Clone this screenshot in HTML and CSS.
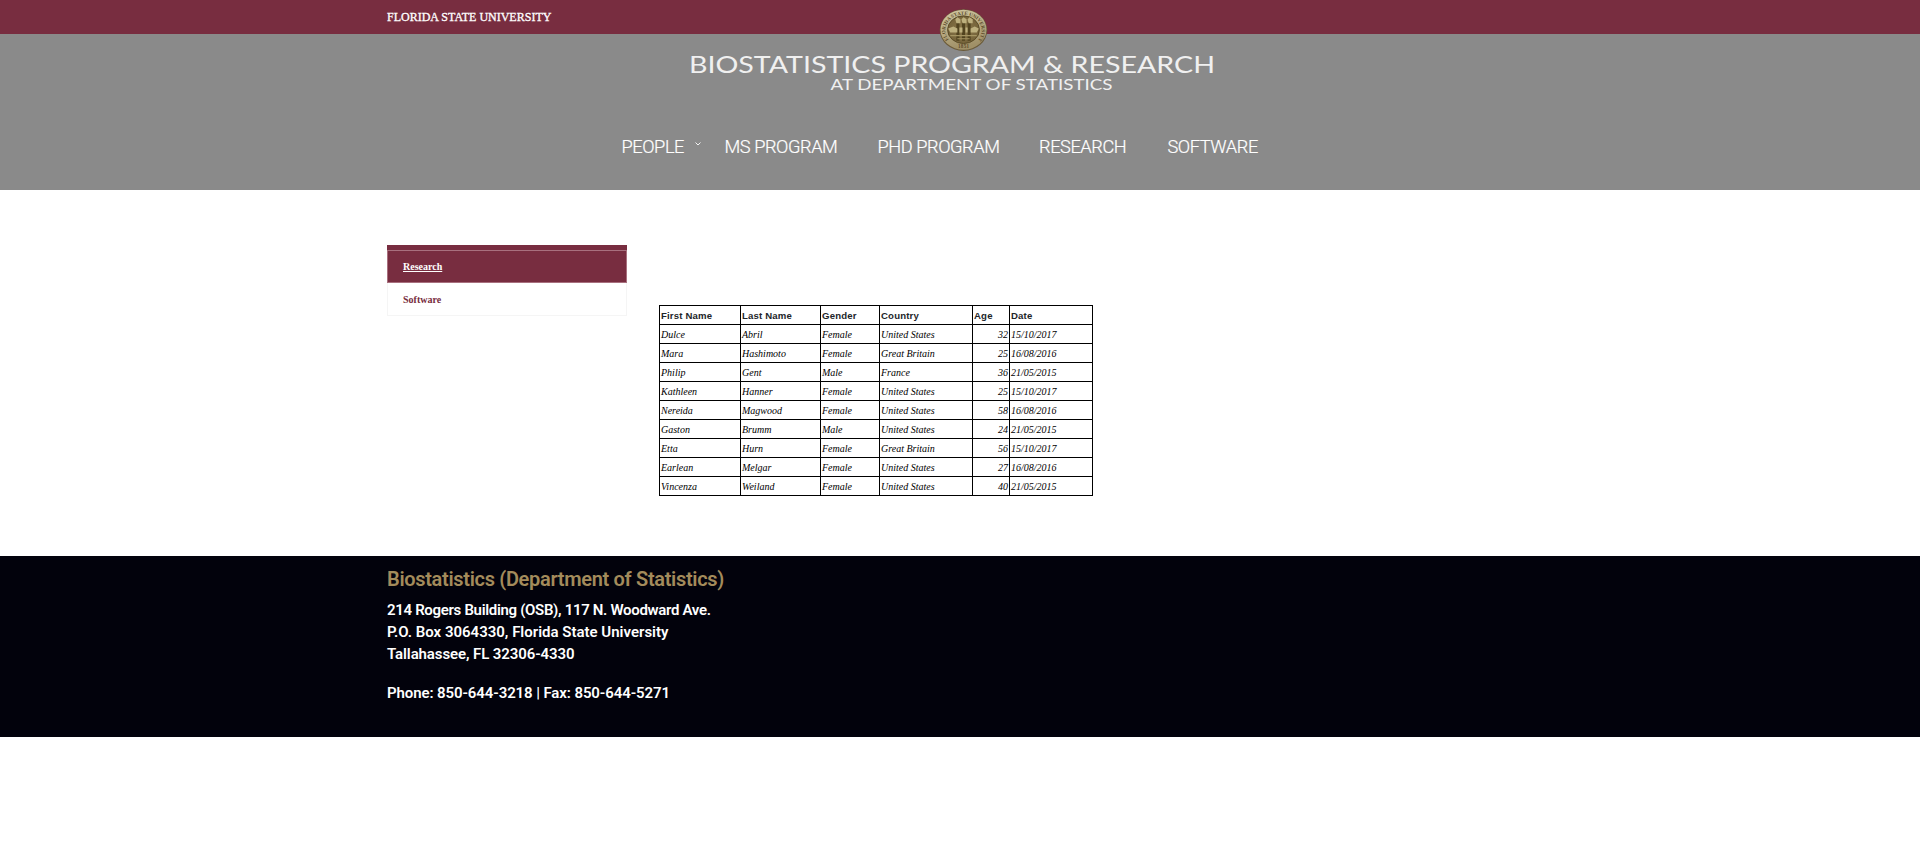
FILE: index.html
```html
<!DOCTYPE html>
<html lang="en">
<head>
<meta charset="utf-8">
<title>Research | Biostatistics</title>
<link rel="stylesheet" href="styles.css">
</head>
<body>
<div class="topbar"><a class="university">FLORIDA STATE UNIVERSITY</a></div>
<svg class="seal" width="49" height="44" viewBox="0 0 48 43" role="img" aria-label="University seal">
  <defs>
    <radialGradient id="gold"><stop offset="0" stop-color="#8c7a4c"/><stop offset="1" stop-color="#75633a"/></radialGradient>
    <linearGradient id="rim" x2="0.3" y2="1"><stop offset="0" stop-color="#d3caa4"/><stop offset="1" stop-color="#a09067"/></linearGradient>
    <path id="arc" d="M9.5 31 A17.8 15.4 0 1 1 38.5 31"/>
  </defs>
  <ellipse cx="24" cy="21.6" rx="23.3" ry="20.4" fill="#6b5a38"/>
  <ellipse cx="24" cy="21.2" rx="22.5" ry="19.6" fill="url(#rim)"/>
  <ellipse cx="24" cy="21.2" rx="15.6" ry="13.6" fill="url(#gold)" stroke="#51421f" stroke-width=".8"/>
  <text class="seal-text"><textPath href="#arc" textLength="72">FLORIDA STATE UNIVERSITY</textPath></text>
  <text class="seal-text" x="18.5" y="38.8" textLength="11">1851</text>
  <g fill="#51431f"><path d="M17 14h3v18h-3zM22.5 14h3v18h-3zM28 14h3v18h-3z"/></g>
  <g fill="#bdb07e"><path d="M16 11l2-2 3 2v4h-4zM22 11l2-2 3 2v4h-4zM28 11l2-2 3 2v4h-4zM9 20l5-2 4 2v4h-7zM31 20l4-2 4 2-2 4h-6zM20 19h3v5h-3zM26 19h2v5h-2z"/></g>
  <path d="M11 27h26M18 30h12" stroke="#a49462" fill="none"/>
</svg>
<header class="header">
  <svg class="wordmark" width="540" height="50" viewBox="684 50 540 50">
    <text class="brand" x="689" y="73.4" textLength="526" lengthAdjust="spacingAndGlyphs">BIOSTATISTICS PROGRAM &amp; RESEARCH</text>
    <text class="brand-sub" x="830.5" y="89.5" textLength="282" lengthAdjust="spacingAndGlyphs">AT DEPARTMENT OF STATISTICS</text>
  </svg>
  <nav class="nav">
    <a>PEOPLE<svg class="chevron" width="6" height="4" viewBox="0 0 6 4"><path d="M.5 .5L3 3L5.5 .5" fill="none" stroke="#fff" stroke-width=".9"/></svg></a>
    <a>MS PROGRAM</a><a>PHD PROGRAM</a><a>RESEARCH</a><a>SOFTWARE</a>
  </nav>
</header>
<main class="main">
  <aside class="side"><a class="active">Research</a><a>Software</a></aside>
  <table class="people">
    <colgroup><col class="c1"><col class="c2"><col class="c3"><col class="c4"><col class="c5"><col class="c6"></colgroup>
    <thead><tr><th>First Name</th><th>Last Name</th><th>Gender</th><th>Country</th><th>Age</th><th>Date</th></tr></thead>
    <tbody>
    <tr><td>Dulce</td><td>Abril</td><td>Female</td><td>United States</td><td>32</td><td>15/10/2017</td></tr>
    <tr><td>Mara</td><td>Hashimoto</td><td>Female</td><td>Great Britain</td><td>25</td><td>16/08/2016</td></tr>
    <tr><td>Philip</td><td>Gent</td><td>Male</td><td>France</td><td>36</td><td>21/05/2015</td></tr>
    <tr><td>Kathleen</td><td>Hanner</td><td>Female</td><td>United States</td><td>25</td><td>15/10/2017</td></tr>
    <tr><td>Nereida</td><td>Magwood</td><td>Female</td><td>United States</td><td>58</td><td>16/08/2016</td></tr>
    <tr><td>Gaston</td><td>Brumm</td><td>Male</td><td>United States</td><td>24</td><td>21/05/2015</td></tr>
    <tr><td>Etta</td><td>Hurn</td><td>Female</td><td>Great Britain</td><td>56</td><td>15/10/2017</td></tr>
    <tr><td>Earlean</td><td>Melgar</td><td>Female</td><td>United States</td><td>27</td><td>16/08/2016</td></tr>
    <tr><td>Vincenza</td><td>Weiland</td><td>Female</td><td>United States</td><td>40</td><td>21/05/2015</td></tr>
    </tbody>
  </table>
</main>
<footer class="footer">
  <h2>Biostatistics (Department of Statistics)</h2>
  <p class="street">214 Rogers Building (OSB), 117 N. Woodward Ave.</p>
  <p>P.O. Box 3064330, Florida State University</p>
  <p class="city">Tallahassee, FL 32306-4330</p>
  <p class="phone">Phone: 850-644-3218 | Fax: 850-644-5271</p>
</footer>
</body>
</html>
```
FILE: styles.css
```css
* { box-sizing: border-box; }
body { margin: 0; background: #fff; font-family: "Liberation Serif", serif; position: relative; }
.topbar { height: 34px; padding-left: 387px; background: #782d40; }
.university { color: #fff; font-size: 12px; line-height: 34px; letter-spacing: 0; -webkit-text-stroke: .3px #fff; }
.seal { position: absolute; left: 938.5px; top: 8px; }
.seal-text { font: bold 5px "Liberation Serif", serif; fill: #5c4b29; }
.header { height: 156px; padding-top: 16px; background: #8a8a8a; }
.wordmark { display: block; margin-left: 684px; }
.brand, .brand-sub { font-family: Lato, sans-serif; fill: #f0f0f0; }
.brand { font-size: 22.4px; }
.brand-sub { font-size: 14.6px; }
.nav { display: grid; grid-template-columns: 103px 153px 161.5px 128.5px 92px; margin: 32px 0 0 621.5px; color: #fff; font: 300 18.2px/30px Roboto, sans-serif; letter-spacing: -.42px; white-space: nowrap; -webkit-text-stroke: .2px #fff; }
.chevron { margin-left: 11px; vertical-align: 7px; }
.main { height: 366px; display: flex; align-items: flex-start; padding-left: 387px; }
.side { width: 240px; margin-top: 55px; border-top: 5px solid #782d40; font-size: 10px; font-weight: bold; color: #782d40; }
.side a { display: block; height: 33px; padding: 0 15px; line-height: 33px; border: 1px solid #f5f5f5; border-top: 0; }
.side .active { line-height: 32px; border: 1px solid #a8707e; background: #782d40; color: #fff; text-decoration: underline; }
.people { width: 434px; margin: 115px 0 0 32px; table-layout: fixed; border-collapse: collapse; font-size: 10px; line-height: 12px; color: #000; }
.people tr { height: 19px; }
.people th, .people td { padding: 2px 1px 0; border: 1px solid #000; text-align: left; vertical-align: middle; white-space: nowrap; }
.people th { font: bold 9.6px/12px "Liberation Sans", sans-serif; letter-spacing: .17px; color: #222529; }
.people td { font-style: italic; }
.people td:nth-child(5) { padding-right: 1px; text-align: right; }
.c1 { width: 81px; } .c2 { width: 80px; } .c3 { width: 59px; } .c4 { width: 93px; } .c5 { width: 37px; } .c6 { width: 83px; }
.footer { height: 181px; padding: 11px 0 0 387px; background: #02020c; color: #fff; font: bold 15px/22px Roboto, sans-serif; }
.footer h2 { margin: 0 0 8px; color: #a38b5b; font-size: 20px; line-height: 24px; font-weight: 600; letter-spacing: -.32px; }
.footer p { margin: 0; font-weight: 600; width: max-content; }
.footer .street { letter-spacing: -.32px; }
.footer .city { letter-spacing: -.1px; }
.footer .phone { margin-top: 17px; letter-spacing: -.1px; }
```
